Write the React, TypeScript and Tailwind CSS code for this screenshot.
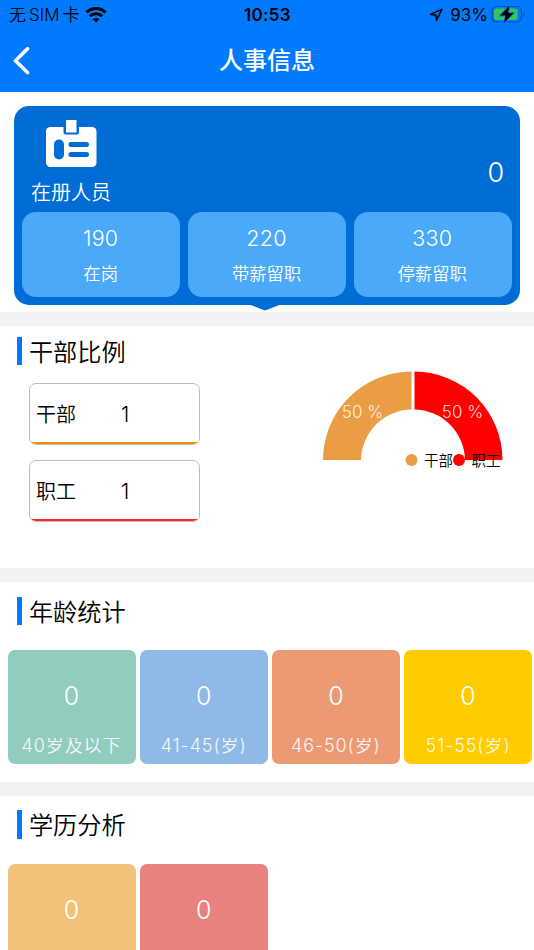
import type { ReactNode } from "react";

type Stat = { value: number; label: string };
type Tile = { value: number; label: string; color: string };

const staff: Stat[] = [
  { value: 190, label: "在岗" },
  { value: 220, label: "带薪留职" },
  { value: 330, label: "停薪留职" },
];

const cadres = [
  { label: "干部", value: 1, line: "bg-[#f38b0c]" },
  { label: "职工", value: 1, line: "bg-[#f92d22]" },
];

const ages: Tile[] = [
  { value: 0, label: "40岁及以下", color: "bg-[#91ccbe]" },
  { value: 0, label: "41-45(岁)", color: "bg-[#8fb9e7]" },
  { value: 0, label: "46-50(岁)", color: "bg-[#eb9a73]" },
  { value: 0, label: "51-55(岁)", color: "bg-[#ffcc00]" },
];

const education: Tile[] = [
  { value: 0, label: "研究生", color: "bg-[#f0c27a]" },
  { value: 0, label: "本科", color: "bg-[#e8827f]" },
];

function StatusBar() {
  return (
    <div className="flex h-[30px] items-center text-[17px] text-black">
      <div className="flex flex-1 items-center pl-[9px]">
        <span className="mt-[2px] whitespace-nowrap font-[350]">
          无<span className="mx-[3px]">SIM</span>卡
        </span>
        <svg className="ml-[5px] h-[16px] w-[22px]" viewBox="0 0 22 16" fill="none">
          <path d="M1.4 5.4a13.6 13.6 0 0 1 19.2 0" stroke="#000" strokeWidth="3.2" />
          <path d="M4.9 9.3a8.6 8.6 0 0 1 12.2 0" stroke="#000" strokeWidth="3" />
          <path d="M11 15.6 7.7 12.3a4.6 4.6 0 0 1 6.6 0z" fill="#000" />
        </svg>
      </div>
      <span className="mt-[1px] text-[17px] font-semibold tracking-[0.3px]">10:53</span>
      <div className="flex flex-1 items-center justify-end pr-[8px]">
        <svg className="h-[14px] w-[14px]" viewBox="0 0 14 14" fill="none">
          <path d="M13 1.2 1.6 6.4l5.4.6.5 5.4z" stroke="#000" strokeWidth="1.5" strokeLinejoin="round" />
        </svg>
        <span className="mt-[2px] ml-[7px]">93%</span>
        <svg className="ml-[3px] h-[20px] w-[35px]" viewBox="0 0 35 20" fill="none">
          <rect x="1" y="1.5" width="29.5" height="15.5" rx="4.5" stroke="#0052aa" strokeWidth="1.2" />
          <rect x="3" y="3.5" width="23.5" height="11.5" rx="2.8" fill="#35c759" />
          <path d="M32.4 7v4.6c1.6-.5 1.6-4.1 0-4.6z" fill="#0052aa" />
          <path
            d="M18.4.8 9 10.6h5.6L13 17.800 22.600 8H17z"
            fill="#000"
            stroke="#007aff"
            strokeWidth="1.6"
            paintOrder="stroke"
          />
        </svg>
      </div>
    </div>
  );
}

function NavBar() {
  return (
    <div className="grid h-[61.5px] grid-cols-[1fr_auto_1fr] items-center">
      <div className="pl-[12px]">
        <svg className="h-[28px] w-[18px]" viewBox="0 0 18 28" fill="none">
          <path d="M15.5 1.8 3.5 13.7l12 11.8" stroke="#fff" strokeWidth="3.6" strokeLinecap="round" strokeLinejoin="round" />
        </svg>
      </div>
      <h1 className="text-[24px] font-medium text-white">人事信息</h1>
    </div>
  );
}

function BadgeIcon() {
  return (
    <svg className="h-[48px] w-[52px]" viewBox="0 0 52 48">
      <rect x="1" y="7" width="50.5" height="40" rx="4.5" fill="#fff" />
      <rect x="18.5" y="0" width="15.5" height="14.5" rx="2" fill="#006dd6" />
      <rect x="21" y="0" width="10.5" height="12.5" fill="#fff" />
      <rect x="9" y="19.5" width="10" height="20" rx="5" fill="#006dd6" />
      <rect x="23.5" y="22" width="20.5" height="5" rx="2.5" fill="#006dd6" />
      <rect x="23.5" y="32" width="20.5" height="5" rx="2.5" fill="#006dd6" />
    </svg>
  );
}

function Summary() {
  return (
    <section className="h-[220.5px] px-[14.4px] pt-[14px]">
      <div className="relative h-[199px] rounded-[15px] bg-[#006dd6] px-[7.5px] text-white">
        <div className="flex h-[106.5px] justify-between">
          <div className="flex flex-col pt-[14px] pl-[9px]">
            <div className="pl-[14px]">
              <BadgeIcon />
            </div>
            <span className="mt-[10px] text-[20px] leading-[30px] font-[350]">在册人员</span>
          </div>
          <span className="mt-[50px] pr-[8px] text-[27px] leading-[34px] font-[350]">0</span>
        </div>
        <div className="grid grid-cols-3 gap-[7.3px]">
          {staff.map((item) => (
            <div key={item.label} className="flex h-[85px] flex-col items-center rounded-[14px] bg-[#4aa9f9] pr-[1px]">
              <span className="mt-[12px] text-[21.5px] leading-[28px] font-[350] tracking-[0.2px]">{item.value}</span>
              <span className="mt-[10px] text-[17.3px] leading-[24px] font-[350]">{item.label}</span>
            </div>
          ))}
        </div>
        <svg className="absolute top-[198.5px] left-[234px] h-[7px] w-[34px]" viewBox="0 0 34 7">
          <path d="M0 0h34L17 6.5z" fill="#006dd6" />
        </svg>
      </div>
    </section>
  );
}

function Divider() {
  return <div className="h-[14px] bg-[#f2f1f6]" />;
}

function SectionTitle({ children }: { children: ReactNode }) {
  return (
    <div className="flex items-center pl-[17.4px]">
      <span className="h-[28.5px] w-[4.5px] bg-[#007aff]" />
      <h2 className="mt-[3px] -mb-[1px] ml-[7px] text-[24.2px] leading-[28.5px] font-[350] text-black">{children}</h2>
    </div>
  );
}

function RatioChart() {
  return (
    <svg className="h-[110px] w-[200px]" viewBox="0 0 200 110">
      <path d="M10 90A88.5 88.5 0 0 1 98.5 1.500V39.500A51.500 51.500 0 0 0 48 90z" fill="#eb9d44" />
      <path d="M101.500 1.500A88.500 88.500 0 0 1 189.500 90H152A51.500 51.500 0 0 0 101.500 39.500z" fill="#ff0000" />
      <g fontSize="17" fill="#fff" fillOpacity="0.85" fontWeight="350" textAnchor="middle">
        <text x="49.5" y="48">50 %</text>
        <text x="149.5" y="47.5">50 %</text>
      </g>
      <circle cx="98.5" cy="90" r="6" fill="#eb9d44" />
      <circle cx="146" cy="90" r="6" fill="#ff0000" />
      <g fontSize="14.5" fill="#000" fontWeight="350">
        <text x="111" y="96">干部</text>
        <text x="158.5" y="96">职工</text>
      </g>
    </svg>
  );
}

function CadreRatio() {
  return (
    <section className="h-[242px] pt-[9.5px]">
      <SectionTitle>干部比例</SectionTitle>
      <div className="flex">
        <div className="mt-[17px] ml-[28.6px] flex w-[171px] flex-col gap-[15px]">
          {cadres.map((item) => (
            <div
              key={item.label}
              className="flex h-[62px] flex-col overflow-hidden rounded-[7px] border border-[#bdbdbd] text-[20px] text-black"
            >
              <div className="flex flex-1 items-center pt-[5px] pl-[6.5px]">
                <span className="w-[85px] font-[350]">{item.label}</span>
                <span className="-mt-[1px] text-[21px] font-[350]">{item.value}</span>
              </div>
              <div className={`h-[2.5px] shrink-0 ${item.line}`} />
            </div>
          ))}
        </div>
        <div className="mt-[4px] ml-[113.3px]">
          <RatioChart />
        </div>
      </div>
    </section>
  );
}

function TileRow({ tiles }: { tiles: Tile[] }) {
  return (
    <div className="mt-[24px] flex gap-[4.2px] pl-[7.5px]">
      {tiles.map((tile) => (
        <div
          key={tile.label}
          className={`flex h-[114px] w-[128px] shrink-0 flex-col items-center rounded-[7px] text-white ${tile.color}`}
        >
          <span className="mt-[29px] text-[25px] leading-[34px] font-[350]">{tile.value}</span>
          {/* label box is shorter than the glyphs, so their tops and bottoms are trimmed */}
          <div className="mt-[25px] h-[15.5px] overflow-hidden text-[18px] leading-[16px] font-[350] tracking-[0.9px] whitespace-nowrap opacity-90">
            {tile.label}
          </div>
        </div>
      ))}
    </div>
  );
}

export default function App() {
  return (
    <div className="h-[950px] w-[534px] overflow-hidden bg-white font-['Inter','Noto_Sans_CJK_SC',sans-serif]">
      <header className="bg-[#007aff]">
        <StatusBar />
        <NavBar />
      </header>
      <Summary />
      <Divider />
      <CadreRatio />
      <Divider />
      <section className="h-[199.5px] pt-[13.5px]">
        <SectionTitle>年龄统计</SectionTitle>
        <TileRow tiles={ages} />
      </section>
      <Divider />
      <section className="pt-[13.5px]">
        <SectionTitle>学历分析</SectionTitle>
        <TileRow tiles={education} />
      </section>
    </div>
  );
}
